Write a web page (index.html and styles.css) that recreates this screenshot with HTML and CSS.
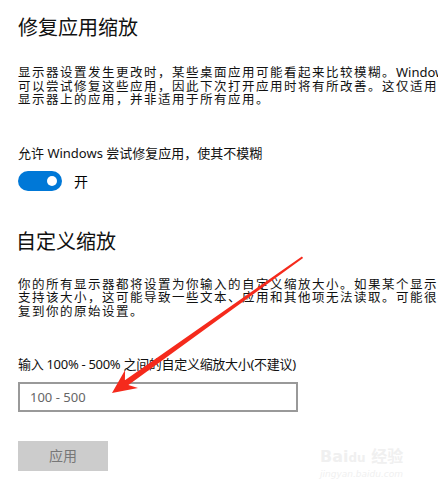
FILE: index.html
```html
<!DOCTYPE html>
<html lang="zh-CN">
<head>
    <meta charset="UTF-8">
    <meta name="viewport" content="width=device-width, initial-scale=1.0">
    <title>缩放设置</title>
    <link rel="stylesheet" href="styles.css">
</head>
<body>
    <div class="page">
        <h2 class="title">修复应用缩放</h2>
        <p class="desc">显示器设置发生更改时，某些桌面应用可能看起来比较模糊。<span class="lat">Windows</span><br>
            可以尝试修复这些应用，因此下次打开应用时将有所改善。这仅适用于<br>
            显示器上的应用，并非适用于所有应用。</p>

        <div class="label first">允许 Windows 尝试修复应用，使其不模糊</div>
        <div class="toggle-row">
            <span class="toggle"><span class="knob"></span></span>
            <span class="toggle-text">开</span>
        </div>

        <h2 class="title second">自定义缩放</h2>
        <p class="desc desc2">你的所有显示器都将设置为你输入的自定义缩放大小。如果某个显示器不<br>
            支持该大小，这可能导致一些文本、应用和其他项无法读取。可能很难恢<br>
            复到你的原始设置。</p>

        <div class="label second-label">输入 100% - 500% 之间的自定义缩放大小(不建议)</div>
        <div class="input">100 - 500</div>
        <div class="button">应用</div>
    </div>

    <!-- red arrow drawn over the page -->
    <svg class="arrow" width="438" height="494" viewBox="0 0 438 494">
        <polygon fill="#f52a1c" points="112,393 138,388 128.4,385 303.1,258.1 301.9,256.5 124.9,380.2 125.1,370.1"/>
    </svg>

    <!-- watermark -->
    <div class="watermark">
        <div class="wm-logo">Bai<span class="wm-du">du</span> 经验</div>
        <div class="wm-url">jingyan.baidu.com</div>
    </div>
</body>
</html>
```

FILE: styles.css
```css
body {
    margin: 0;
    background: #fff;
    font-family: "Noto Sans", "Noto Sans CJK SC", sans-serif;
    color: #000;
    overflow: hidden;
}

.page {
    padding: 16px 0 0 18px;
    white-space: nowrap;
    overflow: hidden;
}

.title {
    margin: 0;
    font-size: 20px;
    line-height: 24px;
    font-weight: normal;
    color: #111;
}

.title.second {
    margin-top: 39px;
    margin-left: -2px;
}

.desc {
    margin: 26px 0 0;
    font-size: 12.5px;
    letter-spacing: 1.5px;
    line-height: 13.5px;
    color: #111;
}

.desc .lat {
    font-size: 13px;
    letter-spacing: 0;
}

.desc2 {
    margin-top: 24px;
}

.label {
    font-size: 13px;
    line-height: 16px;
    color: #111;
}

.label.first {
    margin-top: 38px;
}

.label.second-label {
    margin-top: 38px;
    letter-spacing: -0.3px;
}

.toggle-row {
    display: flex;
    align-items: center;
    gap: 12px;
    margin-top: 10px;
    height: 20px;
}

.toggle {
    width: 44px;
    height: 20px;
    border-radius: 10px;
    background: #0078d7;
    display: flex;
    align-items: center;
    justify-content: flex-end;
    padding-right: 5px;
    box-sizing: border-box;
}

.knob {
    width: 10px;
    height: 10px;
    border-radius: 50%;
    background: #fff;
}

.toggle-text {
    font-size: 14px;
}

.input {
    margin-top: 10px;
    width: 280px;
    height: 30px;
    box-sizing: border-box;
    border: 2px solid #999;
    padding-left: 10px;
    font-size: 13px;
    line-height: 26px;
    color: #666;
}

.button {
    margin-top: 29px;
    width: 90px;
    height: 30px;
    background: #ccc;
    color: #777;
    font-size: 14px;
    line-height: 30px;
    text-align: center;
}

.arrow {
    position: absolute;
    top: 0;
    left: 0;
}

.watermark {
    position: absolute;
    left: 320px;
    top: 448px;
    color: #f0f0f0;
    font-family: "DejaVu Sans", "Noto Sans CJK SC", sans-serif;
}

.wm-logo {
    font-size: 16px;
    line-height: 18px;
    font-weight: bold;
}

.wm-du {
    font-size: 12px;
}

.wm-url {
    font-size: 9px;
    line-height: 14px;
    font-style: italic;
}
```
